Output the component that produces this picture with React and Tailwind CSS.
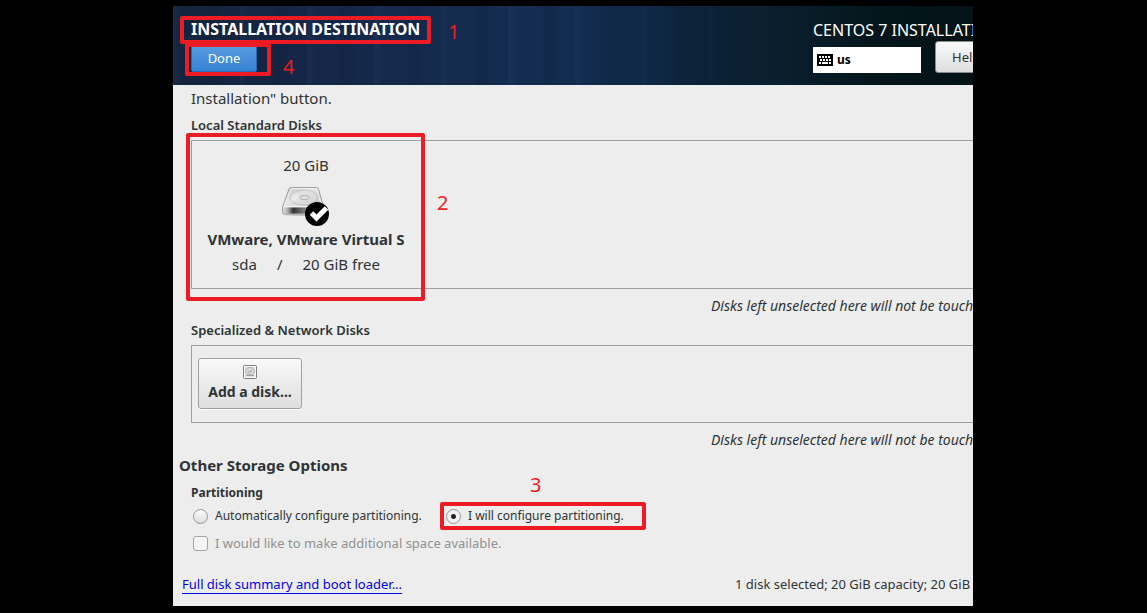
function Marker({ box, label, number }) {
  return (
    <>
      <span aria-hidden="true" className={`pointer-events-none absolute z-10 rounded-xs border-4 border-[#ed1c24] ${box}`} />
      <span className={`pointer-events-none absolute z-10 text-[20px] leading-6 text-[#ed1c24] ${label}`}>{number}</span>
    </>
  );
}

function KeyboardIcon() {
  return (
    <svg width="16" height="12" viewBox="0 0 16 12" aria-hidden="true" shapeRendering="crispEdges">
      <rect width="16" height="12" rx="1" fill="#000" />
      <path
        d="M2 2h2v2h-2zM5 2h2v2h-2zM8 2h2v2h-2zM11 2h2v2h-2zM3 5h2v2h-2zM6 5h2v2h-2zM9 5h2v2h-2zM12 5h2v2h-2zM2 8h2v2h-2zM5 8h6v2h-6zM12 8h2v2h-2z"
        fill="#fff"
      />
    </svg>
  );
}

function DriveIcon() {
  return (
    <svg width="48" height="42" viewBox="1 0 48 42" aria-hidden="true">
      <defs>
        <linearGradient id="top" x1="0" y1="0" x2="1" y2="1">
          <stop offset="0" stopColor="#bdbdbd" />
          <stop offset="0.35" stopColor="#e6e6e6" />
          <stop offset="0.7" stopColor="#cfcfcf" />
          <stop offset="1" stopColor="#bcbcbc" />
        </linearGradient>
        <linearGradient id="front" x1="0" y1="0" x2="1" y2="0">
          <stop offset="0" stopColor="#e0e0e0" />
          <stop offset="0.12" stopColor="#a8a8a8" />
          <stop offset="0.25" stopColor="#333333" />
          <stop offset="0.5" stopColor="#777777" />
          <stop offset="1" stopColor="#999999" />
        </linearGradient>
      </defs>
      <path d="M2 28h42v2q-20 2-41 0z" fill="#999" opacity="0.5" />
      <path d="M10 2.500h25q2 0 2.500 1.500l5 18v5q0 2-2 2h-37q-2 0-2-2v-5l6.500-18q.5-1.500 2-1.500z" fill="url(#top)" stroke="#a0a0a0" />
      <path d="M2 22.500h41v4q0 2-2 2h-37q-2 0-2-2z" fill="url(#front)" />
      <path d="M10.500 3.500h25l5.500 18h-38z" fill="none" stroke="#f2f2f2" />
      <ellipse cx="23" cy="12.500" rx="14" ry="7.500" fill="#dedede" fillOpacity="0.35" stroke="#bdbdbd" strokeWidth="0.800" />
      <path d="M11 17q-3-5 3-9l8 4z" fill="#f5f5f5" opacity="0.4" />
      <ellipse cx="23.500" cy="12.500" rx="5" ry="2" fill="#e0e0e0" stroke="#a4a4a4" strokeWidth="0.800" />
      <circle cx="36" cy="29" r="12" fill="#000" />
      <path d="M30.500 28l5 5 10-10" fill="none" stroke="#fff" strokeWidth="5" />
    </svg>
  );
}

function SmallDriveIcon() {
  return (
    <svg width="16" height="16" viewBox="0 0 16 16" aria-hidden="true">
      <rect x="1.500" y="1.500" width="13" height="13" rx="1" fill="#e2e2e2" stroke="#7d7d7d" />
      <rect x="2.500" y="2.500" width="11" height="11" fill="none" stroke="#fafafa" />
      <ellipse cx="8" cy="7" rx="4.500" ry="3.500" fill="#d8d8d8" stroke="#b4b4b4" />
      <path d="M6 8q2 1 4-2M4 11.500h8" fill="none" stroke="#a0a0a0" />
    </svg>
  );
}

function DiskNote() {
  return (
    <p className="mt-[7px] ml-auto w-[262px] text-[14px] italic">Disks left unselected here will not be touched.</p>
  );
}

const radioClass =
  "size-[15px] shrink-0 appearance-none rounded-full border border-[#979797] bg-linear-to-b from-[#fbfbfb] to-[#dedede] checked:bg-[radial-gradient(circle,#202426_0_2px,#f1f1f1_3px)]";

export default function App() {
  return (
    <div className="min-h-screen bg-black pt-[6px] pr-[174px] pb-[7px] pl-[173px] font-['Noto_Sans',sans-serif] leading-5 whitespace-nowrap text-[#2e3436]">
      <div className="overflow-hidden bg-[#ededed]">
        <header className="relative flex h-[79px] justify-between bg-[linear-gradient(90deg,transparent_50%,rgba(9,29,48,0.4)_62%,#0a1f2e_76%,#04161b_88%,#031317_100%),repeating-linear-gradient(90deg,rgba(90,140,200,0.05)_0_2px,transparent_9px_31px,rgba(0,0,0,0.07)_38px_41px,transparent_52px_67px),linear-gradient(90deg,#15243d_0%,#15284a_22%,#142c50_40%,#112c50_60%,#0a1d30_78%)] pl-[18px] text-white">
          <div className="pt-[13px]">
            <h1 className="text-[16px] font-bold">INSTALLATION DESTINATION</h1>
            <button className="mt-[5px] flex h-[28px] w-[66px] items-center justify-center rounded-xs border border-[#2a6bb5] bg-linear-to-b from-[#5a9ce0] to-[#3583d5] text-[13px]">
              Done
            </button>
          </div>
          <div className="w-[160px] pt-[14px]">
            <p className="text-[16px]">CENTOS 7 INSTALLATION</p>
            <div className="mt-px flex items-start gap-[14px]">
              <button className="mt-[6px] flex h-[26px] w-[108px] shrink-0 items-center gap-1 bg-white px-1 text-[12px] font-bold text-black">
                <KeyboardIcon />
                us
              </button>
              <button className="h-[32px] w-[66px] shrink-0 rounded-[3px] border border-[#8b8b8b] bg-linear-to-b from-[#f9f9f9] to-[#dedede] px-4 text-left text-[13px] text-[#2e3436]">
                Help!
              </button>
            </div>
          </div>
          <Marker box="top-[10px] left-[7px] h-[28px] w-[251px]" label="top-[14px] left-[275px]" number="1" />
          <Marker box="top-[37px] left-[12px] h-[33px] w-[86px]" label="top-[49px] left-[110px]" number="4" />
        </header>

        <main className="pt-[3px] pb-3">
          <div className="pl-[18px]">
            <p className="text-[15px]">Installation" button.</p>
            <h2 className="mt-[7px] text-[13px] font-semibold">Local Standard Disks</h2>
            <div className="relative mt-[5px] h-[149px] border-y border-l border-[#a0a0a0]">
              <button aria-pressed="true" className="flex w-[228px] flex-col items-center pt-[14px] text-[15px]">
                <span>20 GiB</span>
                <span className="mt-[10px] mb-[2px]">
                  <DriveIcon />
                </span>
                <span className="font-bold">VMware, VMware Virtual S</span>
                <span className="mt-[5px] flex">
                  <span>sda</span>
                  <span className="mx-5">/</span>
                  <span>20 GiB free</span>
                </span>
              </button>
              <Marker box="-top-[8px] -left-[6px] h-[168px] w-[239px]" label="top-[50px] left-[245px]" number="2" />
            </div>
            <DiskNote />
            <h2 className="mt-1 text-[13px] font-semibold">Specialized &amp; Network Disks</h2>
            <div className="mt-[5px] h-[78px] border-y border-l border-[#a0a0a0] pt-3 pl-[6px]">
              <button className="flex h-[51px] w-[104px] flex-col items-center rounded-[3px] border border-[#a0a0a0] bg-linear-to-b from-[#f9f9f9] to-[#dedede] pt-[5px] text-[14px] font-bold shadow-[0_1px_0_#fff]">
                <SmallDriveIcon />
                <span className="mt-[2px]">Add a disk...</span>
              </button>
            </div>
            <DiskNote />
          </div>

          <h2 className="mt-[5px] pl-[6px] text-[15px] font-bold">Other Storage Options</h2>
          <div className="pl-[18px]">
            <h3 className="mt-2 text-[12px] font-bold">Partitioning</h3>
            <div className="mt-[3px] flex pl-[2px] text-[12px]">
              <label className="flex w-[253px] items-center gap-[7px]">
                <input type="radio" name="partitioning" className={radioClass} />
                Automatically configure partitioning.
              </label>
              <div className="relative">
                <label className="flex items-center gap-[7px]">
                  <input type="radio" name="partitioning" defaultChecked className={radioClass} />
                  I will configure partitioning.
                </label>
                <Marker box="-top-[4px] -left-[6px] h-[28px] w-[206px]" label="-top-[33px] left-[84px]" number="3" />
              </div>
            </div>
            <label className="mt-[7px] flex items-center gap-[7px] pl-[2px] text-[13px] text-[#8f9192]">
              <input type="checkbox" disabled className="size-[15px] appearance-none rounded-[3px] border border-[#a3a3a3] bg-[#f4f4f4]" />
              I would like to make additional space available.
            </label>
          </div>
          <div className="mt-[21px] flex justify-between pl-[9px] text-[13px]">
            <a href="#summary" className="text-[#0000ee] underline underline-offset-4">
              Full disk summary and boot loader...
            </a>
            <p className="w-[238px]">1 disk selected; 20 GiB capacity; 20 GiB free</p>
          </div>
        </main>
      </div>
    </div>
  );
}
